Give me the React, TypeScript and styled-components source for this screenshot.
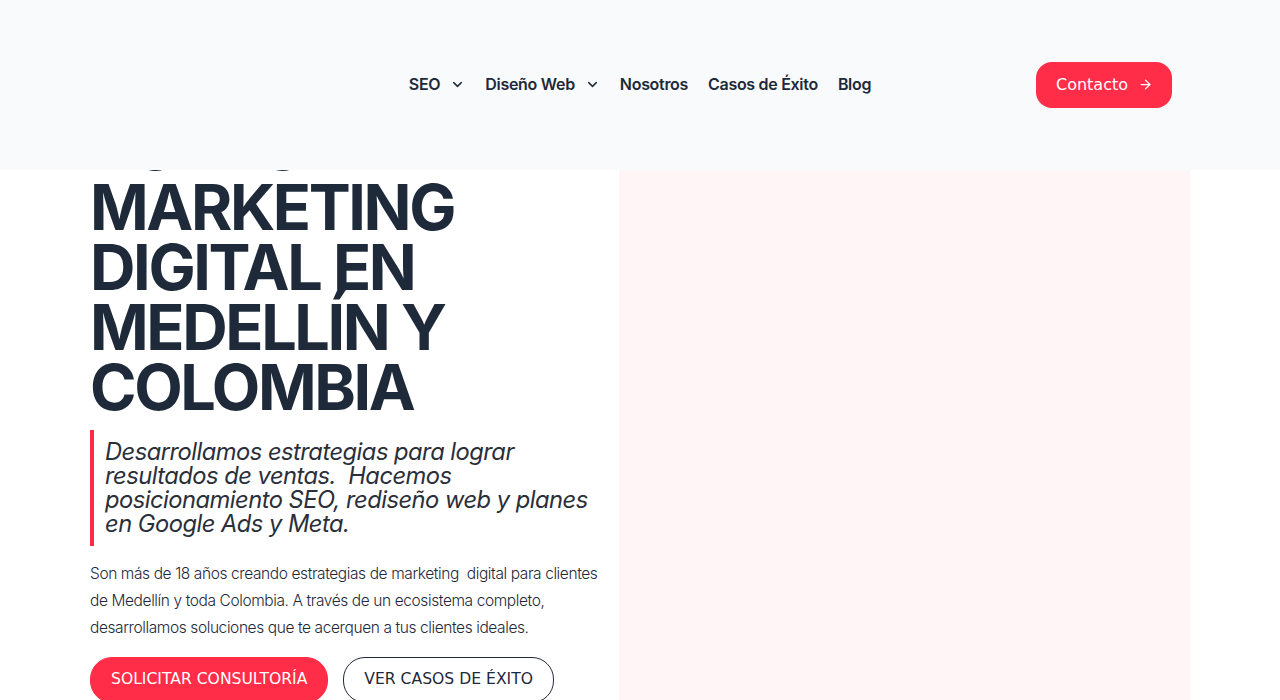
import React from "react";
import styled, { createGlobalStyle } from "styled-components";
import { ChevronDown, ArrowRight } from "lucide-react";

const Global = createGlobalStyle`
  html, body { margin: 0; padding: 0; background: #ffffff; }
  body { font-family: "Inter", "Noto Sans", sans-serif; color: #1e2939; }
  * { box-sizing: border-box; }
`;

const Header = styled.header`
  position: fixed;
  top: 0;
  left: 0;
  right: 0;
  height: 170px;
  background: #f9fafb;
  z-index: 10;
  display: flex;
  justify-content: center;
`;

const HeaderInner = styled.div`
  width: 1100px;
  display: grid;
  grid-template-columns: 1fr auto 1fr;
  align-items: center;
`;

const Nav = styled.nav`
  display: flex;
  align-items: center;
  gap: 20px;
  margin-top: -2px;
`;

const NavItem = styled.a`
  display: flex;
  align-items: center;
  gap: 10px;
  font-family: "Inter", sans-serif;
  font-weight: 600;
  font-size: 16px;
  letter-spacing: -0.3px;
  color: #1e2939;
  text-decoration: none;
`;

const HeaderRight = styled.div`
  display: flex;
  justify-content: flex-end;
  padding-right: 18px;
`;

const ContactButton = styled.a`
  display: flex;
  align-items: center;
  gap: 10px;
  height: 46px;
  padding: 0 19px 2px 20px;
  background: #ff2d48;
  color: #ffffff;
  border-radius: 16px;
  font-family: "DejaVu Sans", sans-serif;
  font-size: 16px;
  text-decoration: none;
`;

const Main = styled.main`
  display: flex;
  justify-content: center;
`;

const Hero = styled.section`
  width: 1100px;
  display: grid;
  grid-template-columns: 529px 1fr;
  min-height: 900px;
`;

const LeftCol = styled.div`
  padding: 117px 8px 40px 0;
  display: flex;
  flex-direction: column;
`;

const Title = styled.h1`
  margin: 0;
  font-family: "Inter", sans-serif;
  font-weight: 700;
  font-size: 63px;
  line-height: 60px;
  letter-spacing: -2.4px;
  color: #1e2939;
  text-transform: uppercase;
`;

const Lead = styled.blockquote`
  margin: 13px 0 0 0;
  padding: 10px 0 10px 11px;
  border-left: 4px solid #ff2d48;
  font-family: "Inter", sans-serif;
  font-style: italic;
  font-weight: 400;
  font-size: 23.7px;
  line-height: 24px;
  letter-spacing: -0.5px;
  color: #2a2f3a;
`;

const Body = styled.p`
  margin: 14px 0 0 0;
  font-family: "Inter", sans-serif;
  font-weight: 300;
  font-size: 15.5px;
  line-height: 27px;
  letter-spacing: -0.4px;
  color: #1e2939;
`;

const Actions = styled.div`
  display: flex;
  gap: 15px;
  margin-top: 16px;
`;

const Btn = styled.a<{ $primary?: boolean }>`
  display: inline-flex;
  align-items: center;
  height: 46px;
  padding: 0 20px 2px;
  border-radius: 22px;
  font-family: "DejaVu Sans", sans-serif;
  font-size: 15.6px;
  text-decoration: none;
  background: ${(p) => (p.$primary ? "#ff2d48" : "#ffffff")};
  color: ${(p) => (p.$primary ? "#ffffff" : "#1e2939")};
  border: 1px solid ${(p) => (p.$primary ? "#ff2d48" : "#1e2939")};
`;

const Visual = styled.div`
  background: #fff5f6;
`;

export default function App() {
  return (
    <>
      <Global />
      <Header>
        <HeaderInner>
          <div />
          <Nav>
            <NavItem href="#">
              SEO <ChevronDown size={15} strokeWidth={2.3} />
            </NavItem>
            <NavItem href="#">
              Diseño Web <ChevronDown size={15} strokeWidth={2.3} />
            </NavItem>
            <NavItem href="#">Nosotros</NavItem>
            <NavItem href="#">Casos de Éxito</NavItem>
            <NavItem href="#">Blog</NavItem>
          </Nav>
          <HeaderRight>
            <ContactButton href="#">
              Contacto <ArrowRight size={15} strokeWidth={2} />
            </ContactButton>
          </HeaderRight>
        </HeaderInner>
      </Header>
      <Main>
        <Hero>
          <LeftCol>
            <Title>
              Agencia de
              <br />
              Marketing
              <br />
              Digital en
              <br />
              Medellín y
              <br />
              Colombia
            </Title>
            <Lead>
              Desarrollamos estrategias para lograr resultados de ventas.&nbsp; Hacemos
              posicionamiento SEO, rediseño web y planes en Google Ads y Meta.
            </Lead>
            <Body>
              Son más de 18 años creando estrategias de marketing&nbsp; digital para
              clientes de Medellín y toda Colombia. A través de un ecosistema completo,
              desarrollamos soluciones que te acerquen a tus clientes ideales.
            </Body>
            <Actions>
              <Btn href="#" $primary>
                SOLICITAR CONSULTORÍA
              </Btn>
              <Btn href="#">VER CASOS DE ÉXITO</Btn>
            </Actions>
          </LeftCol>
          <Visual />
        </Hero>
      </Main>
    </>
  );
}
